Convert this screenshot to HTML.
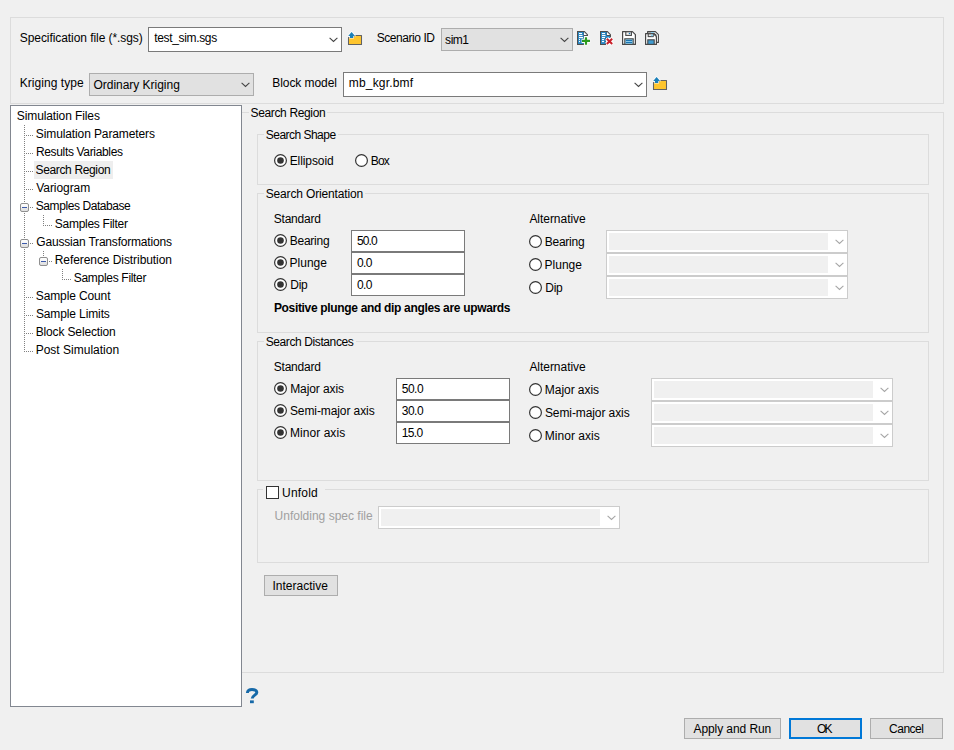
<!DOCTYPE html>
<html><head><meta charset="utf-8"><style>
*{box-sizing:border-box;margin:0;padding:0}
html,body{width:954px;height:750px;overflow:hidden;background:#f0f0f0}
body{position:relative;font-family:"Liberation Sans",sans-serif;font-size:12px;color:#000}
.a{position:absolute}
.t{position:absolute;font-size:12px;line-height:14px;white-space:nowrap;color:#000}
.g{position:absolute;border:1px solid #dcdcdc}
.gb{position:absolute;background:#f0f0f0}
.cw{position:absolute;border:1px solid #7a7a7a;background:#fff}
.cg{position:absolute;border:1px solid #adadad;background:#e1e1e1}
.cd{position:absolute;border:1px solid #cccccc;background:#fff}
.cd i{position:absolute;left:2px;top:2px;bottom:2px;right:19px;background:#f0f0f0}
.ed{position:absolute;border:1px solid #7a7a7a;background:#fff}
.btn{position:absolute;border:1px solid #adadad;background:#e1e1e1}
svg{position:absolute;overflow:visible}
</style></head><body>
<div class="g" style="left:10px;top:17px;width:934px;height:87px;"></div>
<div id="t0" class="t" style="left:19.75px;top:31px;letter-spacing:-0.068px;">Specification file (*.sgs)</div>
<div class="cw" style="left:148px;top:27px;width:194px;height:25px;"></div>
<div id="t1" class="t" style="left:154.30px;top:31px;letter-spacing:-0.345px;">test_sim.sgs</div>
<svg style="left:328.5px;top:37px" width="9" height="5" viewBox="0 0 9 5"><path d="M0.6 0.8 L4.5 4.4 L8.4 0.8" fill="none" stroke="#444" stroke-width="1.1"/></svg>
<div id="t2" class="t" style="left:376.65px;top:31px;letter-spacing:-0.430px;">Scenario ID</div>
<div class="cg" style="left:441px;top:28px;width:132px;height:23px;"></div>
<div id="t3" class="t" style="left:445.10px;top:32.5px;letter-spacing:-0.467px;">sim1</div>
<svg style="left:559.5px;top:37px" width="9" height="5" viewBox="0 0 9 5"><path d="M0.6 0.8 L4.5 4.4 L8.4 0.8" fill="none" stroke="#444" stroke-width="1.1"/></svg>
<div id="t4" class="t" style="left:19.70px;top:76px;letter-spacing:0.055px;">Kriging type</div>
<div class="cg" style="left:89px;top:73px;width:165px;height:23px;"></div>
<div id="t5" class="t" style="left:93.45px;top:77.5px;letter-spacing:-0.020px;">Ordinary Kriging</div>
<svg style="left:240.5px;top:82px" width="9" height="5" viewBox="0 0 9 5"><path d="M0.6 0.8 L4.5 4.4 L8.4 0.8" fill="none" stroke="#444" stroke-width="1.1"/></svg>
<div id="t6" class="t" style="left:272.25px;top:76px;letter-spacing:-0.070px;">Block model</div>
<div class="cw" style="left:343px;top:72px;width:304px;height:25px;"></div>
<div id="t7" class="t" style="left:348.80px;top:75.6px;letter-spacing:0.178px;">mb_kgr.bmf</div>
<svg style="left:633.5px;top:82px" width="9" height="5" viewBox="0 0 9 5"><path d="M0.6 0.8 L4.5 4.4 L8.4 0.8" fill="none" stroke="#444" stroke-width="1.1"/></svg>
<svg style="left:344px;top:26px" width="22" height="22" viewBox="0 0 22 22">
<path d="M4.5 11.5 H9 L10.5 9.5 H17.5 V18.5 H4.5 Z" fill="#fec52e" stroke="#626262" stroke-width="1.05" stroke-linejoin="round"/>
<path d="M7.6 4.9 L12.2 10.3 H9.9 V12.4 H5.3 V10.3 H3 Z" fill="#fff" opacity="0.9"/>
<path d="M7.6 5.9 L11 9.9 H9.2 V12 H6 V9.9 H4.2 Z" fill="#1a7fb8"/>
</svg>
<svg style="left:649px;top:71px" width="22" height="22" viewBox="0 0 22 22">
<path d="M4.5 11.5 H9 L10.5 9.5 H17.5 V18.5 H4.5 Z" fill="#fec52e" stroke="#626262" stroke-width="1.05" stroke-linejoin="round"/>
<path d="M7.6 4.9 L12.2 10.3 H9.9 V12.4 H5.3 V10.3 H3 Z" fill="#fff" opacity="0.9"/>
<path d="M7.6 5.9 L11 9.9 H9.2 V12 H6 V9.9 H4.2 Z" fill="#1a7fb8"/>
</svg>
<svg style="left:574px;top:28px" width="20" height="20" viewBox="0 0 20 20">
<path d="M3 3 H10.6 L14 6.4 V8 H10 V17 H3 Z" fill="#4e4e4e"/>
<rect x="4" y="4" width="5.6" height="12" fill="#2a87c3"/>
<path d="M10 4 L13 7 H10 Z" fill="#fff"/>
<rect x="5" y="5" width="3" height="1.1" fill="#fff"/><rect x="5" y="7" width="3.5" height="1.1" fill="#fff"/><rect x="5" y="9" width="4" height="1.1" fill="#fff"/>
<rect x="5" y="11" width="1" height="1.1" fill="#fff"/><rect x="5" y="13" width="1" height="1.1" fill="#fff"/>
<path d="M12 8.2 V17.2 M7.6 12.9 H16.2" stroke="#fff" stroke-width="4.2"/>
<path d="M12 9.2 V16.8 M8 12.9 H16" stroke="#2b9a1f" stroke-width="2.2"/>
</svg>
<svg style="left:597px;top:28px" width="20" height="20" viewBox="0 0 20 20">
<path d="M3 3 H10.6 L14 6.4 V10 H9 V17 H3 Z" fill="#4e4e4e"/>
<path d="M4 4 H9.6 V8 H13 V10 H8.5 V16 H4 Z" fill="#2a87c3"/>
<path d="M10 4 L13 7 H10 Z" fill="#fff"/>
<rect x="5" y="5" width="3" height="1.1" fill="#fff"/><rect x="5" y="7" width="3.5" height="1.1" fill="#fff"/><rect x="5" y="9" width="3" height="1.1" fill="#fff"/>
<rect x="5" y="11" width="2" height="1.1" fill="#fff"/><rect x="5" y="13" width="2" height="1.1" fill="#fff"/>
<path d="M9.6 10.6 L15.4 16.2 M15.4 10.6 L9.6 16.2" stroke="#fff" stroke-width="4.2"/>
<path d="M9.8 10.8 L15.2 16 M15.2 10.8 L9.8 16" stroke="#c9212b" stroke-width="2"/>
</svg>
<svg style="left:619px;top:28px" width="20" height="20" viewBox="0 0 20 20">
<path d="M3.6 3.6 H13.4 L16.4 6.6 V16.4 H3.6 Z" fill="#fff" stroke="#474747" stroke-width="1.2" stroke-linejoin="round"/>
<rect x="6.8" y="3.8" width="5.6" height="3.6" fill="#f4f4f4" stroke="#474747" stroke-width="1.1"/>
<circle cx="10.5" cy="5.5" r="0.8" fill="#1f7ab8"/>
<rect x="5.8" y="10.8" width="8.4" height="5.6" fill="#8ccbea" stroke="#474747" stroke-width="1.1"/>
<path d="M7 12.5 H13 M7 14.5 H13" stroke="#1a73b0" stroke-width="1"/>
</svg>
<svg style="left:642px;top:28px" width="20" height="20" viewBox="0 0 20 20">
<path d="M5.6 3.6 H13.4 L16.4 6.6 V14.4 H14 V7 L12 5.4 H5.6 Z" fill="#fff" stroke="#474747" stroke-width="1.1" stroke-linejoin="round"/>
<rect x="9" y="4" width="3" height="1.4" fill="#8ccbea"/>
<path d="M3.6 5.6 H11.4 L14.4 8.6 V16.4 H3.6 Z" fill="#fff" stroke="#474747" stroke-width="1.2" stroke-linejoin="round"/>
<rect x="6.2" y="5.8" width="5" height="2.8" fill="#e8e8e8" stroke="#474747" stroke-width="1.1"/>
<rect x="9" y="6.4" width="2" height="1.8" fill="#8ccbea"/>
<rect x="5.8" y="11.8" width="6.4" height="4.6" fill="#3f9bd0" stroke="#474747" stroke-width="1.1"/>
</svg>
<div class="g" style="left:236px;top:112px;width:708px;height:561px;"></div>
<div class="gb" style="left:249.3px;top:111px;width:78.2px;height:3px"></div>
<div id="t8" class="t" style="left:250.50px;top:106px;letter-spacing:-0.350px;">Search Region</div>
<div class="g" style="left:257px;top:134px;width:672px;height:51px;"></div>
<div class="gb" style="left:264.4px;top:133px;width:73.7px;height:3px"></div>
<div id="t9" class="t" style="left:265.75px;top:128px;letter-spacing:-0.518px;">Search Shape</div>
<svg style="left:274px;top:154px" width="13" height="13" viewBox="0 0 13 13"><circle cx="6.5" cy="6.5" r="5.9" fill="#fff" stroke="#333" stroke-width="1.2"/><circle cx="6.5" cy="6.5" r="3.3" fill="#333"/></svg>
<div id="t10" class="t" style="left:289.65px;top:154px;letter-spacing:-0.087px;">Ellipsoid</div>
<svg style="left:355px;top:154px" width="13" height="13" viewBox="0 0 13 13"><circle cx="6.5" cy="6.5" r="5.9" fill="#fff" stroke="#333" stroke-width="1.2"/></svg>
<div id="t11" class="t" style="left:370.65px;top:154px;letter-spacing:-0.750px;">Box</div>
<div class="g" style="left:257px;top:193px;width:672px;height:140px;"></div>
<div class="gb" style="left:264.4px;top:192px;width:100.8px;height:3px"></div>
<div id="t12" class="t" style="left:265.70px;top:187px;letter-spacing:-0.153px;">Search Orientation</div>
<div id="t13" class="t" style="left:273.70px;top:212px;letter-spacing:-0.200px;">Standard</div>
<svg style="left:274px;top:234px" width="13" height="13" viewBox="0 0 13 13"><circle cx="6.5" cy="6.5" r="5.9" fill="#fff" stroke="#333" stroke-width="1.2"/><circle cx="6.5" cy="6.5" r="3.3" fill="#333"/></svg>
<div id="t14" class="t" style="left:289.80px;top:234px;letter-spacing:-0.267px;">Bearing</div>
<div class="ed" style="left:351px;top:230px;width:114px;height:22px;"></div>
<div id="t15" class="t" style="left:356.90px;top:234px;letter-spacing:-0.867px;">50.0</div>
<svg style="left:274px;top:256px" width="13" height="13" viewBox="0 0 13 13"><circle cx="6.5" cy="6.5" r="5.9" fill="#fff" stroke="#333" stroke-width="1.2"/><circle cx="6.5" cy="6.5" r="3.3" fill="#333"/></svg>
<div id="t16" class="t" style="left:289.60px;top:256px;">Plunge</div>
<div class="ed" style="left:351px;top:252px;width:114px;height:22px;"></div>
<div id="t17" class="t" style="left:357.10px;top:256px;letter-spacing:-0.700px;">0.0</div>
<svg style="left:274px;top:278px" width="13" height="13" viewBox="0 0 13 13"><circle cx="6.5" cy="6.5" r="5.9" fill="#fff" stroke="#333" stroke-width="1.2"/><circle cx="6.5" cy="6.5" r="3.3" fill="#333"/></svg>
<div id="t18" class="t" style="left:290.30px;top:278px;letter-spacing:-0.300px;">Dip</div>
<div class="ed" style="left:351px;top:274px;width:114px;height:22px;"></div>
<div id="t19" class="t" style="left:357.10px;top:278px;letter-spacing:-0.700px;">0.0</div>
<div id="t20" class="t" style="left:273.90px;top:301px;letter-spacing:-0.327px;font-weight:bold">Positive plunge and dip angles are upwards</div>
<div id="t21" class="t" style="left:529.40px;top:212px;letter-spacing:-0.040px;">Alternative</div>
<svg style="left:529px;top:235px" width="13" height="13" viewBox="0 0 13 13"><circle cx="6.5" cy="6.5" r="5.9" fill="#fff" stroke="#333" stroke-width="1.2"/></svg>
<div id="t22" class="t" style="left:544.80px;top:235px;letter-spacing:-0.267px;">Bearing</div>
<div class="cd" style="left:606px;top:230px;width:242px;height:23px"><i></i></div>
<svg style="left:834.5px;top:239px" width="9" height="5" viewBox="0 0 9 5"><path d="M0.6 0.8 L4.5 4.4 L8.4 0.8" fill="none" stroke="#a6a6a6" stroke-width="1.1"/></svg>
<svg style="left:529px;top:258px" width="13" height="13" viewBox="0 0 13 13"><circle cx="6.5" cy="6.5" r="5.9" fill="#fff" stroke="#333" stroke-width="1.2"/></svg>
<div id="t23" class="t" style="left:544.60px;top:258px;">Plunge</div>
<div class="cd" style="left:606px;top:253px;width:242px;height:23px"><i></i></div>
<svg style="left:834.5px;top:262px" width="9" height="5" viewBox="0 0 9 5"><path d="M0.6 0.8 L4.5 4.4 L8.4 0.8" fill="none" stroke="#a6a6a6" stroke-width="1.1"/></svg>
<svg style="left:529px;top:281px" width="13" height="13" viewBox="0 0 13 13"><circle cx="6.5" cy="6.5" r="5.9" fill="#fff" stroke="#333" stroke-width="1.2"/></svg>
<div id="t24" class="t" style="left:545.30px;top:281px;letter-spacing:-0.300px;">Dip</div>
<div class="cd" style="left:606px;top:276px;width:242px;height:23px"><i></i></div>
<svg style="left:834.5px;top:285px" width="9" height="5" viewBox="0 0 9 5"><path d="M0.6 0.8 L4.5 4.4 L8.4 0.8" fill="none" stroke="#a6a6a6" stroke-width="1.1"/></svg>
<div class="g" style="left:257px;top:341px;width:672px;height:140px;"></div>
<div class="gb" style="left:264.4px;top:340px;width:91.3px;height:3px"></div>
<div id="t25" class="t" style="left:265.65px;top:335px;letter-spacing:-0.393px;">Search Distances</div>
<div id="t26" class="t" style="left:273.70px;top:360px;letter-spacing:-0.200px;">Standard</div>
<svg style="left:274px;top:382px" width="13" height="13" viewBox="0 0 13 13"><circle cx="6.5" cy="6.5" r="5.9" fill="#fff" stroke="#333" stroke-width="1.2"/><circle cx="6.5" cy="6.5" r="3.3" fill="#333"/></svg>
<div id="t27" class="t" style="left:290.20px;top:382.3px;letter-spacing:-0.089px;">Major axis</div>
<div class="ed" style="left:396px;top:378px;width:114px;height:22px;"></div>
<div id="t28" class="t" style="left:401.80px;top:382px;letter-spacing:-0.533px;">50.0</div>
<svg style="left:274px;top:404px" width="13" height="13" viewBox="0 0 13 13"><circle cx="6.5" cy="6.5" r="5.9" fill="#fff" stroke="#333" stroke-width="1.2"/><circle cx="6.5" cy="6.5" r="3.3" fill="#333"/></svg>
<div id="t29" class="t" style="left:289.95px;top:404.3px;letter-spacing:-0.093px;">Semi-major axis</div>
<div class="ed" style="left:396px;top:400px;width:114px;height:22px;"></div>
<div id="t30" class="t" style="left:401.80px;top:404px;letter-spacing:-0.533px;">30.0</div>
<svg style="left:274px;top:426px" width="13" height="13" viewBox="0 0 13 13"><circle cx="6.5" cy="6.5" r="5.9" fill="#fff" stroke="#333" stroke-width="1.2"/><circle cx="6.5" cy="6.5" r="3.3" fill="#333"/></svg>
<div id="t31" class="t" style="left:289.90px;top:426.3px;letter-spacing:0.067px;">Minor axis</div>
<div class="ed" style="left:396px;top:422px;width:114px;height:22px;"></div>
<div id="t32" class="t" style="left:401.70px;top:426px;letter-spacing:-0.600px;">15.0</div>
<div id="t33" class="t" style="left:529.40px;top:360px;letter-spacing:-0.040px;">Alternative</div>
<svg style="left:529px;top:383px" width="13" height="13" viewBox="0 0 13 13"><circle cx="6.5" cy="6.5" r="5.9" fill="#fff" stroke="#333" stroke-width="1.2"/></svg>
<div id="t34" class="t" style="left:544.80px;top:383px;letter-spacing:-0.044px;">Major axis</div>
<div class="cd" style="left:651px;top:378px;width:242px;height:23px"><i></i></div>
<svg style="left:879.5px;top:387px" width="9" height="5" viewBox="0 0 9 5"><path d="M0.6 0.8 L4.5 4.4 L8.4 0.8" fill="none" stroke="#a6a6a6" stroke-width="1.1"/></svg>
<svg style="left:529px;top:406px" width="13" height="13" viewBox="0 0 13 13"><circle cx="6.5" cy="6.5" r="5.9" fill="#fff" stroke="#333" stroke-width="1.2"/></svg>
<div id="t35" class="t" style="left:544.95px;top:406px;letter-spacing:-0.093px;">Semi-major axis</div>
<div class="cd" style="left:651px;top:401px;width:242px;height:23px"><i></i></div>
<svg style="left:879.5px;top:410px" width="9" height="5" viewBox="0 0 9 5"><path d="M0.6 0.8 L4.5 4.4 L8.4 0.8" fill="none" stroke="#a6a6a6" stroke-width="1.1"/></svg>
<svg style="left:529px;top:429px" width="13" height="13" viewBox="0 0 13 13"><circle cx="6.5" cy="6.5" r="5.9" fill="#fff" stroke="#333" stroke-width="1.2"/></svg>
<div id="t36" class="t" style="left:544.75px;top:429px;letter-spacing:0.033px;">Minor axis</div>
<div class="cd" style="left:651px;top:424px;width:242px;height:23px"><i></i></div>
<svg style="left:879.5px;top:433px" width="9" height="5" viewBox="0 0 9 5"><path d="M0.6 0.8 L4.5 4.4 L8.4 0.8" fill="none" stroke="#a6a6a6" stroke-width="1.1"/></svg>
<div class="g" style="left:257px;top:489px;width:672px;height:74px;"></div>
<div class="gb" style="left:263px;top:484px;width:62px;height:16px"></div>
<svg style="left:266px;top:486px" width="13" height="13"><rect x="0.5" y="0.5" width="12" height="12" fill="#fff" stroke="#333"/></svg>
<div id="t37" class="t" style="left:282.10px;top:486px;letter-spacing:0.200px;">Unfold</div>
<div id="t38" class="t" style="left:274.60px;top:509px;color:#a0a0a0">Unfolding spec file</div>
<div class="cd" style="left:378px;top:506px;width:242px;height:23px"><i></i></div>
<svg style="left:606.5px;top:515px" width="9" height="5" viewBox="0 0 9 5"><path d="M0.6 0.8 L4.5 4.4 L8.4 0.8" fill="none" stroke="#a6a6a6" stroke-width="1.1"/></svg>
<div class="btn" style="left:264px;top:575px;width:74px;height:21px;"></div>
<div id="t39" class="t" style="left:272.55px;top:579px;letter-spacing:-0.010px;">Interactive</div>
<div class="a" style="left:10px;top:105px;width:232px;height:602px;border:1px solid #828790;background:#fff"></div>
<div class="a" style="left:34px;top:161px;width:79px;height:18px;background:#eeeeee"></div>
<div id="t40" class="t" style="left:16.80px;top:109px;letter-spacing:-0.107px;">Simulation Files</div>
<div id="t41" class="t" style="left:35.85px;top:127px;letter-spacing:-0.115px;">Simulation Parameters</div>
<div id="t42" class="t" style="left:35.90px;top:145px;letter-spacing:-0.337px;">Results Variables</div>
<div id="t43" class="t" style="left:35.50px;top:163px;letter-spacing:-0.350px;">Search Region</div>
<div id="t44" class="t" style="left:36.30px;top:181px;letter-spacing:-0.075px;">Variogram</div>
<div id="t45" class="t" style="left:35.80px;top:199px;letter-spacing:-0.427px;">Samples Database</div>
<div id="t46" class="t" style="left:54.80px;top:217px;letter-spacing:-0.277px;">Samples Filter</div>
<div id="t47" class="t" style="left:36.35px;top:235px;letter-spacing:-0.196px;">Gaussian Transformations</div>
<div id="t48" class="t" style="left:54.70px;top:253px;letter-spacing:-0.067px;">Reference Distribution</div>
<div id="t49" class="t" style="left:73.80px;top:271px;letter-spacing:-0.308px;">Samples Filter</div>
<div id="t50" class="t" style="left:35.75px;top:289px;letter-spacing:-0.118px;">Sample Count</div>
<div id="t51" class="t" style="left:35.90px;top:307px;letter-spacing:-0.117px;">Sample Limits</div>
<div id="t52" class="t" style="left:35.65px;top:325px;letter-spacing:-0.136px;">Block Selection</div>
<div id="t53" class="t" style="left:35.65px;top:343px;letter-spacing:0.007px;">Post Simulation</div>
<svg class="a" style="left:0;top:0" width="954" height="750" shape-rendering="crispEdges"><path d="M24 125h1v1h-1zM24 127h1v1h-1zM24 129h1v1h-1zM24 131h1v1h-1zM24 133h1v1h-1zM24 135h1v1h-1zM24 137h1v1h-1zM24 139h1v1h-1zM24 141h1v1h-1zM24 143h1v1h-1zM24 145h1v1h-1zM24 147h1v1h-1zM24 149h1v1h-1zM24 151h1v1h-1zM24 153h1v1h-1zM24 155h1v1h-1zM24 157h1v1h-1zM24 159h1v1h-1zM24 161h1v1h-1zM24 163h1v1h-1zM24 165h1v1h-1zM24 167h1v1h-1zM24 169h1v1h-1zM24 171h1v1h-1zM24 173h1v1h-1zM24 175h1v1h-1zM24 177h1v1h-1zM24 179h1v1h-1zM24 181h1v1h-1zM24 183h1v1h-1zM24 185h1v1h-1zM24 187h1v1h-1zM24 189h1v1h-1zM24 191h1v1h-1zM24 193h1v1h-1zM24 195h1v1h-1zM24 197h1v1h-1zM24 199h1v1h-1zM24 201h1v1h-1zM24 213h1v1h-1zM24 215h1v1h-1zM24 217h1v1h-1zM24 219h1v1h-1zM24 221h1v1h-1zM24 223h1v1h-1zM24 225h1v1h-1zM24 227h1v1h-1zM24 229h1v1h-1zM24 231h1v1h-1zM24 233h1v1h-1zM24 235h1v1h-1zM24 237h1v1h-1zM24 249h1v1h-1zM24 251h1v1h-1zM24 253h1v1h-1zM24 255h1v1h-1zM24 257h1v1h-1zM24 259h1v1h-1zM24 261h1v1h-1zM24 263h1v1h-1zM24 265h1v1h-1zM24 267h1v1h-1zM24 269h1v1h-1zM24 271h1v1h-1zM24 273h1v1h-1zM24 275h1v1h-1zM24 277h1v1h-1zM24 279h1v1h-1zM24 281h1v1h-1zM24 283h1v1h-1zM24 285h1v1h-1zM24 287h1v1h-1zM24 289h1v1h-1zM24 291h1v1h-1zM24 293h1v1h-1zM24 295h1v1h-1zM24 297h1v1h-1zM24 299h1v1h-1zM24 301h1v1h-1zM24 303h1v1h-1zM24 305h1v1h-1zM24 307h1v1h-1zM24 309h1v1h-1zM24 311h1v1h-1zM24 313h1v1h-1zM24 315h1v1h-1zM24 317h1v1h-1zM24 319h1v1h-1zM24 321h1v1h-1zM24 323h1v1h-1zM24 325h1v1h-1zM24 327h1v1h-1zM24 329h1v1h-1zM24 331h1v1h-1zM24 333h1v1h-1zM24 335h1v1h-1zM24 337h1v1h-1zM24 339h1v1h-1zM24 341h1v1h-1zM24 343h1v1h-1zM24 345h1v1h-1zM24 347h1v1h-1zM24 349h1v1h-1zM24 351h1v1h-1zM26 135h1v1h-1zM28 135h1v1h-1zM30 135h1v1h-1zM32 135h1v1h-1zM26 153h1v1h-1zM28 153h1v1h-1zM30 153h1v1h-1zM32 153h1v1h-1zM26 171h1v1h-1zM28 171h1v1h-1zM30 171h1v1h-1zM32 171h1v1h-1zM26 189h1v1h-1zM28 189h1v1h-1zM30 189h1v1h-1zM32 189h1v1h-1zM26 297h1v1h-1zM28 297h1v1h-1zM30 297h1v1h-1zM32 297h1v1h-1zM26 315h1v1h-1zM28 315h1v1h-1zM30 315h1v1h-1zM32 315h1v1h-1zM26 333h1v1h-1zM28 333h1v1h-1zM30 333h1v1h-1zM32 333h1v1h-1zM26 351h1v1h-1zM28 351h1v1h-1zM30 351h1v1h-1zM32 351h1v1h-1zM30 207h1v1h-1zM32 207h1v1h-1zM30 243h1v1h-1zM32 243h1v1h-1zM43 215h1v1h-1zM43 217h1v1h-1zM43 219h1v1h-1zM43 221h1v1h-1zM43 223h1v1h-1zM43 225h1v1h-1zM45 225h1v1h-1zM47 225h1v1h-1zM49 225h1v1h-1zM51 225h1v1h-1zM43 251h1v1h-1zM43 253h1v1h-1zM43 255h1v1h-1zM49 261h1v1h-1zM51 261h1v1h-1zM62 269h1v1h-1zM62 271h1v1h-1zM62 273h1v1h-1zM62 275h1v1h-1zM62 277h1v1h-1zM62 279h1v1h-1zM64 279h1v1h-1zM66 279h1v1h-1zM68 279h1v1h-1zM70 279h1v1h-1z" fill="#808080"/><defs><linearGradient id="bx" x1="0" y1="0" x2="0" y2="1"><stop offset="0" stop-color="#fff"/><stop offset="0.5" stop-color="#f4f4f4"/><stop offset="0.55" stop-color="#e6e6e6"/><stop offset="1" stop-color="#e0e0e0"/></linearGradient></defs><rect x="20.5" y="203.5" width="8" height="8" rx="1.5" fill="url(#bx)" stroke="#8f8f8f" shape-rendering="geometricPrecision"/><rect x="22" y="207" width="5" height="1" fill="#3c5aaa"/><rect x="20.5" y="239.5" width="8" height="8" rx="1.5" fill="url(#bx)" stroke="#8f8f8f" shape-rendering="geometricPrecision"/><rect x="22" y="243" width="5" height="1" fill="#3c5aaa"/><rect x="39.5" y="257.5" width="8" height="8" rx="1.5" fill="url(#bx)" stroke="#8f8f8f" shape-rendering="geometricPrecision"/><rect x="41" y="261" width="5" height="1" fill="#3c5aaa"/></svg>
<svg style="left:244px;top:686.8px" width="16" height="18" viewBox="0 0 16 18"><path d="M3.4 6 C3.4 3.4 5.4 2.6 8 2.6 C10.8 2.6 12.8 3.6 12.8 5.6 C12.8 8 8.2 8.4 8.2 11.6" fill="none" stroke="#1669a8" stroke-width="3"/><rect x="6" y="13.4" width="3.8" height="2.8" fill="#1669a8"/></svg>
<div class="btn" style="left:684px;top:718px;width:97px;height:21px;"></div>
<div id="t54" class="t" style="left:693.50px;top:722px;letter-spacing:-0.083px;">Apply and Run</div>
<div class="btn" style="left:789px;top:718px;width:73px;height:21px;border:2px solid #0078d7"></div>
<div id="t55" class="t" style="left:817.05px;top:722px;letter-spacing:-1.900px;">OK</div>
<div class="btn" style="left:870px;top:718px;width:73px;height:21px;"></div>
<div id="t56" class="t" style="left:889.10px;top:722px;letter-spacing:-0.520px;">Cancel</div>
</body></html>
